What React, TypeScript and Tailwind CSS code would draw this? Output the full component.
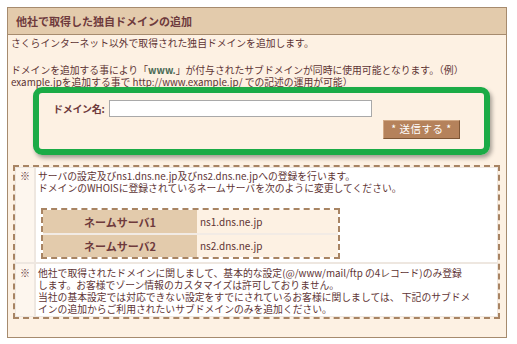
import React from "react";

const F = { fontFamily: '"Noto Sans CJK JP", "Noto Sans", sans-serif' };

export default function App() {
  return (
    <div
      className="relative w-[517px] h-[344px] bg-white pt-[7px] pl-[7px] text-[#5e3434]"
      style={F}
    >
      <div className="w-[500px] h-[331px] border border-[#a68b6e] bg-[#fdf1e3]">
        <div className="h-[27px] bg-[#e3cbac] border-b border-[#a68b6e] pl-[8px] flex items-center text-[11px] font-bold text-[#6e3a3c] leading-none">
          他社で取得した独自ドメインの追加
        </div>
        <div className="pl-[3px] pt-[2px] text-[9.8px] leading-[12px]">
          <p className="whitespace-nowrap">さくらインターネット以外で取得された独自ドメインを追加します。</p>
          <p className="mt-[15px] whitespace-nowrap">
            ドメインを追加する事により「<span className="text-[#4a6a55] font-bold">www.</span>」が付与されたサブドメインが同時に使用可能となります。（例）
            <br />
            example.jpを追加する事で http://www.example.jp/ での記述の運用が可能）
          </p>
        </div>

        <div className="mt-[12px] pl-[45px]">
          <div className="flex items-center">
            <span className="w-[56px] whitespace-nowrap text-[10px] tracking-[-0.3px] font-bold text-[#6e3a3c] leading-none">ドメイン名:</span>
            <div className="w-[263px] h-[17px] bg-white border border-[#a9a9a9]" />
          </div>
          <div className="mt-[3px] pl-[330px]">
            <div className="w-[77px] h-[19px] bg-[#b5825b] border border-t-[#d2a985] border-l-[#d2a985] border-r-[#7d5636] border-b-[#7d5636] flex items-center justify-center text-white text-[10.5px] leading-none tracking-[0.5px]">
              * 送信する *
            </div>
          </div>
        </div>

        <div className="mt-[26px] ml-[5px] w-[487px] border-2 border-dashed border-[#a88463] bg-clip-padding">
          <div className="grid grid-cols-[18px_1fr] gap-[2px] bg-[#eee7e0] p-[1px] bg-clip-padding">
            <div className="bg-[#fdf6ee] text-[10px] leading-[12px] pt-[2px] text-center">※</div>
            <div className="bg-white pl-[2px] pt-[2px] pb-[3px] text-[9.8px] leading-[12px]">
              <p className="whitespace-nowrap">サーバの設定及びns1.dns.ne.jp及びns2.dns.ne.jpへの登録を行います。</p>
              <p className="whitespace-nowrap">ドメインのWHOISに登録されているネームサーバを次のように変更してください。</p>
              <div className="mt-[14px] ml-[3px] w-[299px] border-2 border-dashed border-[#a88463] bg-clip-padding">
                <div className="grid grid-cols-[154px_1fr] gap-y-[2px] bg-[#f2ebe5]">
                  <div className="h-[23px] bg-[#e3cbac] flex items-center justify-center text-[11px] font-bold text-[#6e3a3c]">ネームサーバ1</div>
                  <div className="h-[23px] bg-[#fdf1e3] flex items-center pl-[3px] text-[10px]">ns1.dns.ne.jp</div>
                  <div className="h-[22px] bg-[#e3cbac] flex items-center justify-center text-[11px] font-bold text-[#6e3a3c]">ネームサーバ2</div>
                  <div className="h-[22px] bg-[#fdf1e3] flex items-center pl-[3px] text-[10px]">ns2.dns.ne.jp</div>
                </div>
              </div>
            </div>
            <div className="bg-[#fdf6ee] text-[10px] leading-[12px] pt-[3px] text-center">※</div>
            <div className="bg-white pl-[2px] pt-[3px] pb-[1px] text-[9.8px] leading-[12px]">
              <p className="whitespace-nowrap">他社で取得されたドメインに関しまして、基本的な設定(@/www/mail/ftp の4レコード)のみ登録</p>
              <p className="whitespace-nowrap">します。お客様でゾーン情報のカスタマイズは許可しておりません。</p>
              <p className="whitespace-nowrap">当社の基本設定では対応できない設定をすでにされているお客様に関しましては、 下記のサブドメ</p>
              <p className="whitespace-nowrap">インの追加からご利用されたいサブドメインのみを追加ください。</p>
            </div>
          </div>
        </div>
      </div>

      <div className="absolute left-[33px] top-[87px] w-[457px] h-[68px] border-[6px] border-[#1bab46] rounded-[9px] shadow-[2px_3px_4px_rgba(0,0,0,0.35)] pointer-events-none" />
    </div>
  );
}
